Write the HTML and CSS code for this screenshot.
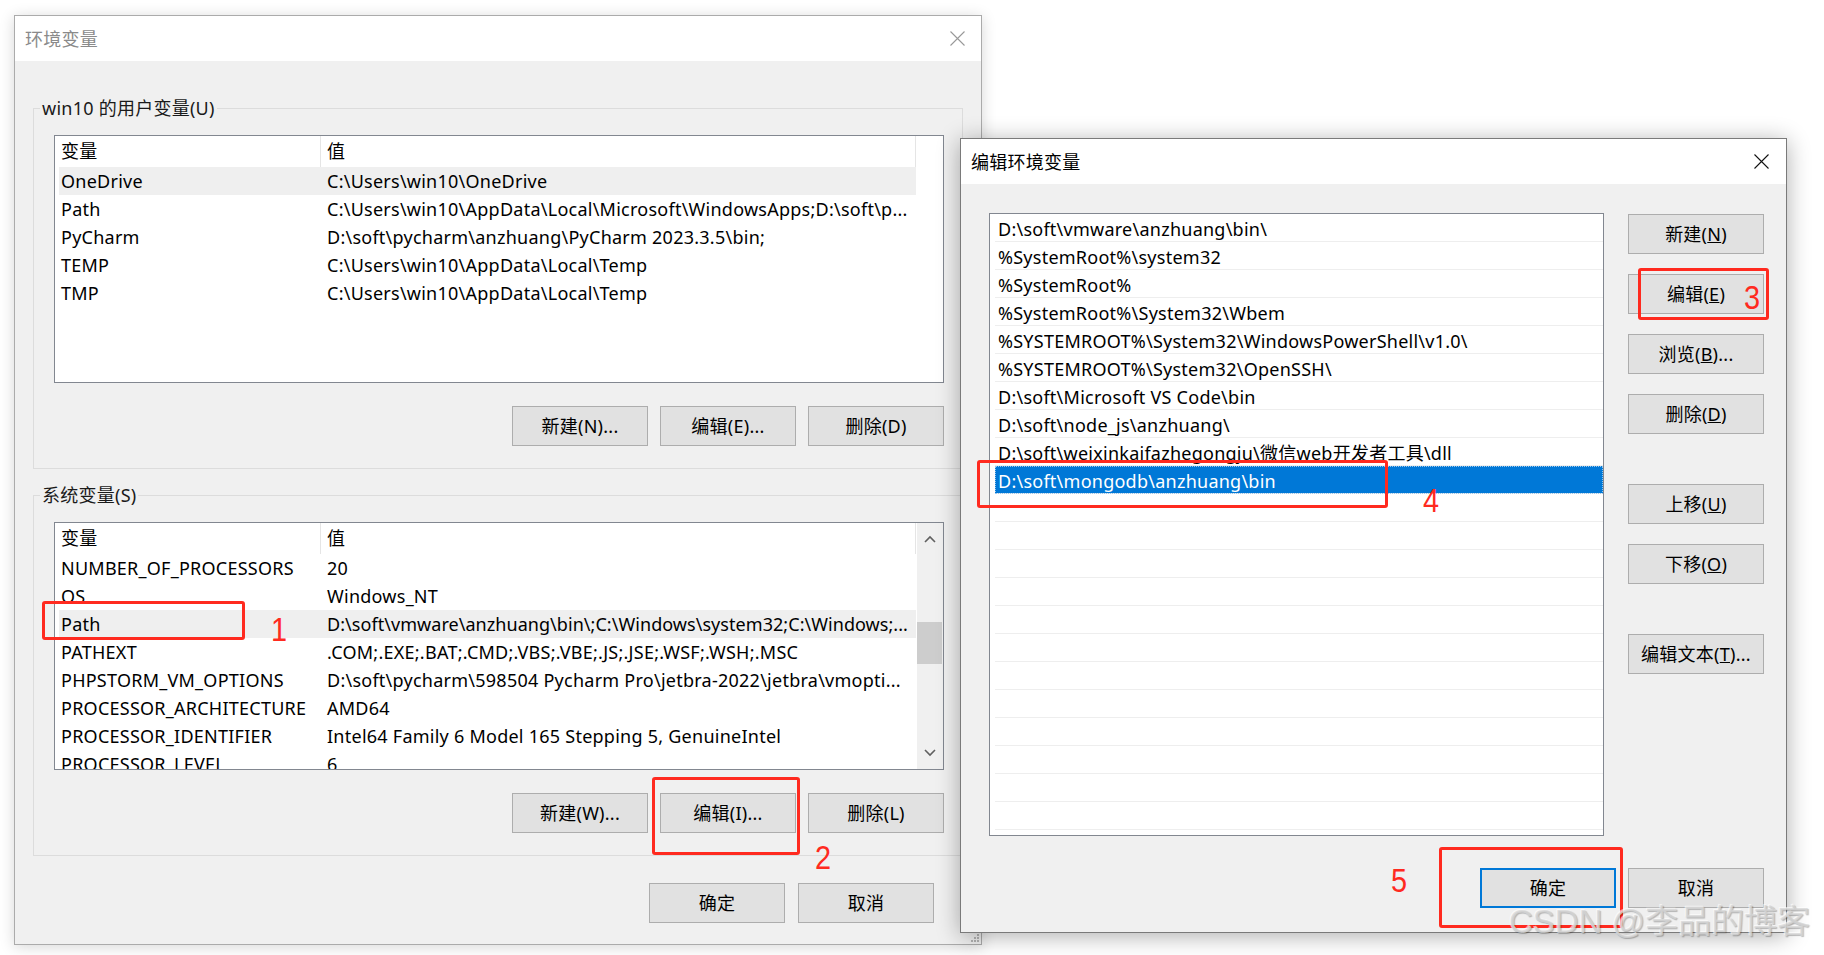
FILE: index.html
```html
<!DOCTYPE html>
<html lang="zh-CN">
<head>
<meta charset="utf-8">
<title>环境变量</title>
<link rel="stylesheet" href="styles.css">
</head>
<body>

<div class="win win-env">
  <div class="titlebar inactive">
    <span class="title">环境变量</span>
    <svg class="close" width="15" height="15" viewBox="0 0 15 15"><path d="M0.5 0.5 L14.5 14.5 M14.5 0.5 L0.5 14.5" stroke="#999" stroke-width="1.1" fill="none"/></svg>
  </div>
  <div class="env-body">
    <fieldset class="group">
      <legend>win10 的用户变量(U)</legend>
      <div class="lv">
        <div class="lv-cols">
          <div class="lv-head"><div class="c1">变量</div><div class="c2">值</div></div>
          <div class="lv-row sel"><div class="c1">OneDrive</div><div class="c2">C:\Users\win10\OneDrive</div></div>
          <div class="lv-row"><div class="c1">Path</div><div class="c2">C:\Users\win10\AppData\Local\Microsoft\WindowsApps;D:\soft\p...</div></div>
          <div class="lv-row"><div class="c1">PyCharm</div><div class="c2">D:\soft\pycharm\anzhuang\PyCharm 2023.3.5\bin;</div></div>
          <div class="lv-row"><div class="c1">TEMP</div><div class="c2">C:\Users\win10\AppData\Local\Temp</div></div>
          <div class="lv-row"><div class="c1">TMP</div><div class="c2">C:\Users\win10\AppData\Local\Temp</div></div>
        </div>
      </div>
      <div class="btn-row">
        <button class="btn">新建(N)...</button>
        <button class="btn">编辑(E)...</button>
        <button class="btn">删除(D)</button>
      </div>
    </fieldset>

    <fieldset class="group group-sys">
      <legend>系统变量(S)</legend>
      <div class="lv">
        <div class="lv-cols">
          <div class="lv-head"><div class="c1">变量</div><div class="c2">值</div></div>
          <div class="lv-row"><div class="c1">NUMBER_OF_PROCESSORS</div><div class="c2">20</div></div>
          <div class="lv-row"><div class="c1">OS</div><div class="c2">Windows_NT</div></div>
          <div class="lv-row sel"><div class="c1">Path</div><div class="c2 tight">D:\soft\vmware\anzhuang\bin\;C:\Windows\system32;C:\Windows;...</div></div>
          <div class="lv-row"><div class="c1">PATHEXT</div><div class="c2">.COM;.EXE;.BAT;.CMD;.VBS;.VBE;.JS;.JSE;.WSF;.WSH;.MSC</div></div>
          <div class="lv-row"><div class="c1">PHPSTORM_VM_OPTIONS</div><div class="c2">D:\soft\pycharm\598504 Pycharm Pro\jetbra-2022\jetbra\vmopti...</div></div>
          <div class="lv-row"><div class="c1">PROCESSOR_ARCHITECTURE</div><div class="c2">AMD64</div></div>
          <div class="lv-row"><div class="c1">PROCESSOR_IDENTIFIER</div><div class="c2">Intel64 Family 6 Model 165 Stepping 5, GenuineIntel</div></div>
          <div class="lv-row"><div class="c1">PROCESSOR_LEVEL</div><div class="c2">6</div></div>
        </div>
        <div class="vscroll">
          <div class="sb-btn"><svg width="12" height="8" viewBox="0 0 12 8"><path d="M1 7 L6 2 L11 7" stroke="#606060" stroke-width="1.6" fill="none"/></svg></div>
          <div class="sb-track"><div class="sb-thumb"></div></div>
          <div class="sb-btn"><svg width="12" height="8" viewBox="0 0 12 8"><path d="M1 1 L6 6 L11 1" stroke="#606060" stroke-width="1.6" fill="none"/></svg></div>
        </div>
      </div>
      <div class="btn-row">
        <button class="btn">新建(W)...</button>
        <button class="btn">编辑(I)...</button>
        <button class="btn">删除(L)</button>
      </div>
    </fieldset>

    <div class="foot env-foot">
      <button class="btn">确定</button>
      <button class="btn">取消</button>
    </div>
  </div>
  <svg class="grip" width="10" height="10" viewBox="0 0 10 10"><g fill="#b4b4b4"><rect x="7" y="1" width="2" height="2"/><rect x="4" y="4" width="2" height="2"/><rect x="7" y="4" width="2" height="2"/><rect x="1" y="7" width="2" height="2"/><rect x="4" y="7" width="2" height="2"/><rect x="7" y="7" width="2" height="2"/></g></svg>
</div>

<div class="win win-edit">
  <div class="titlebar">
    <span class="title">编辑环境变量</span>
    <svg class="close" width="15" height="15" viewBox="0 0 15 15"><path d="M0.5 0.5 L14.5 14.5 M14.5 0.5 L0.5 14.5" stroke="#111" stroke-width="1.1" fill="none"/></svg>
  </div>
  <div class="edit-body">
    <div class="edit-main">
      <div class="plist">
        <div class="it">D:\soft\vmware\anzhuang\bin\</div>
        <div class="it">%SystemRoot%\system32</div>
        <div class="it">%SystemRoot%</div>
        <div class="it">%SystemRoot%\System32\Wbem</div>
        <div class="it">%SYSTEMROOT%\System32\WindowsPowerShell\v1.0\</div>
        <div class="it">%SYSTEMROOT%\System32\OpenSSH\</div>
        <div class="it">D:\soft\Microsoft VS Code\bin</div>
        <div class="it">D:\soft\node_js\anzhuang\</div>
        <div class="it">D:\soft\weixinkaifazhegongju\微信web开发者工具\dll</div>
        <div class="it sel">D:\soft\mongodb\anzhuang\bin</div>
        <div class="it"></div><div class="it"></div><div class="it"></div><div class="it"></div>
        <div class="it"></div><div class="it"></div><div class="it"></div><div class="it"></div>
        <div class="it"></div><div class="it"></div><div class="it"></div><div class="it"></div>
      </div>
      <div class="side">
        <button class="btn">新建(<u>N</u>)</button>
        <button class="btn">编辑(<u>E</u>)</button>
        <button class="btn">浏览(<u>B</u>)...</button>
        <button class="btn">删除(<u>D</u>)</button>
        <button class="btn sp">上移(<u>U</u>)</button>
        <button class="btn">下移(<u>O</u>)</button>
        <button class="btn sp">编辑文本(<u>T</u>)...</button>
      </div>
    </div>
    <div class="foot edit-foot">
      <button class="btn default">确定</button>
      <button class="btn">取消</button>
    </div>
  </div>
</div>

<div class="mark" style="left:42px;top:601px;width:203px;height:39px"></div>
<div class="num" style="left:271px;top:612px">1</div>
<div class="mark" style="left:652px;top:777px;width:148px;height:78px"></div>
<div class="num" style="left:815px;top:840px">2</div>
<div class="mark" style="left:1638px;top:268px;width:131px;height:52px"></div>
<div class="num" style="left:1744px;top:280px">3</div>
<div class="mark" style="left:977px;top:460px;width:411px;height:48px"></div>
<div class="num" style="left:1423px;top:483px">4</div>
<div class="mark" style="left:1439px;top:847px;width:184px;height:81px"></div>
<div class="num" style="left:1391px;top:863px">5</div>

<div class="watermark">CSDN @李品的博客</div>

</body>
</html>
```
FILE: styles.css
```css
* { box-sizing: border-box; }
html, body { margin: 0; padding: 0; }
body {
  width: 1824px;
  height: 955px;
  position: relative;
  overflow: hidden;
  background: #fff;
  font-family: "Noto Sans", "Noto Sans CJK SC", sans-serif;
  font-size: 18px;
  line-height: 24px;
  letter-spacing: 0.25px;
  color: #000;
}

.win {
  position: absolute;
  background: #f0f0f0;
  display: flex;
  flex-direction: column;
}
.win-env {
  left: 14px; top: 15px;
  width: 968px; height: 930px;
  border: 1px solid #ababab;
  box-shadow: 0 2px 14px rgba(0,0,0,0.16);
}
.win-edit {
  left: 960px; top: 138px;
  width: 827px; height: 795px;
  border: 1px solid #7a7a7a;
  box-shadow: 0 3px 22px rgba(0,0,0,0.32);
}

.titlebar {
  flex: none;
  height: 45px;
  background: #fff;
  display: flex;
  align-items: center;
  justify-content: space-between;
  padding-left: 10px;
}
.titlebar .close { margin-right: 16px; }
.titlebar.inactive .title { color: #8a8a8a; }
.win-edit .titlebar .close { margin-right: 17px; }

.env-body {
  flex: 1;
  padding: 35px 0 0 18px;
}

.group {
  width: 930px;
  margin: 0;
  min-width: 0;
  border: 1px solid #dcdcdc;
  padding: 15px 18px 22px 20px;
}
.group legend {
  margin-left: -14px;
  padding: 0 2px;
  line-height: 24px;
  color: #1a1a1a;
}
.group-sys { margin-top: 14px; }

.lv {
  height: 248px;
  border: 1px solid #828790;
  background: #fff;
  display: flex;
  overflow: hidden;
}
.lv-cols {
  width: 861px;
  flex: none;
  padding-left: 4px;
}
.lv-head, .lv-row {
  display: grid;
  grid-template-columns: 262px 1fr;
}
.lv-head {
  height: 31px;
  line-height: 31px;
  border-right: 1px solid #e5e5e5;
}
.lv-head .c1 { border-right: 1px solid #e5e5e5; }
.lv-row { height: 28px; line-height: 28px; }
.lv-row.sel { background: #efefef; }
.c1, .c2 { white-space: nowrap; overflow: hidden; }
.c1 { padding-left: 2px; }
.c2 { padding-left: 6px; }
.c2.tight { letter-spacing: 0.05px; }

.vscroll {
  width: 26px;
  margin-left: auto;
  background: #f0f0f0;
  display: flex;
  flex-direction: column;
}
.sb-btn {
  height: 32px;
  display: flex;
  align-items: center;
  justify-content: center;
}
.sb-track { flex: 1; padding: 67px 1px 0 0; }
.sb-thumb { height: 42px; background: #cdcdcd; }

.btn-row {
  display: flex;
  justify-content: flex-end;
  gap: 12px;
  margin-top: 23px;
}
.btn {
  width: 136px;
  height: 40px;
  margin: 0;
  padding: 0;
  background: #e1e1e1;
  border: 1px solid #adadad;
  font: inherit;
  letter-spacing: inherit;
  line-height: 36px;
  color: #000;
  text-align: center;
  white-space: nowrap;
}
.btn.default { border: 2px solid #0078d7; }

.foot {
  display: flex;
  justify-content: flex-end;
}
.env-foot {
  gap: 13px;
  margin-top: 27px;
  padding-right: 47px;
}

.grip { position: absolute; right: 1px; bottom: 1px; }

.edit-body {
  flex: 1;
  padding: 29px 22px 0 28px;
  display: flex;
  flex-direction: column;
}
.edit-main { display: flex; gap: 24px; }
.plist {
  width: 615px;
  height: 623px;
  border: 1px solid #828790;
  background: #fff;
  padding: 0 0 0 5px;
  overflow: hidden;
}
.it {
  height: 28px;
  padding-top: 2px;
  line-height: 26px;
  border-bottom: 1px solid #eeeeee;
  padding-left: 3px;
  white-space: nowrap;
  overflow: hidden;
}
.it.sel {
  background: #0078d7;
  color: #fff;
  outline: 1px dotted #9ac7ec;
  outline-offset: -1px;
}
.side {
  width: 136px;
  display: flex;
  flex-direction: column;
  gap: 20px;
  padding-top: 1px;
}
.side .sp { margin-top: 30px; }
.edit-foot { gap: 12px; margin-top: 32px; }

.mark {
  position: absolute;
  border: 3px solid #ff2a1f;
  border-radius: 3px;
}
.num {
  position: absolute;
  font-family: "Liberation Sans", sans-serif;
  font-size: 34px;
  line-height: 34px;
  letter-spacing: 0;
  color: #ff2a1f;
  transform: scaleX(0.85);
  transform-origin: left top;
}
.watermark {
  position: absolute;
  left: 1509px;
  top: 901px;
  font-family: "Liberation Sans", "Noto Sans CJK SC", sans-serif;
  font-size: 33px;
  line-height: 42px;
  letter-spacing: 0;
  white-space: nowrap;
  color: rgba(215,215,215,0.75);
  text-shadow: 1px 1px 1px rgba(0,0,0,0.25), -1px -1px 0 rgba(255,255,255,0.6);
}
```
